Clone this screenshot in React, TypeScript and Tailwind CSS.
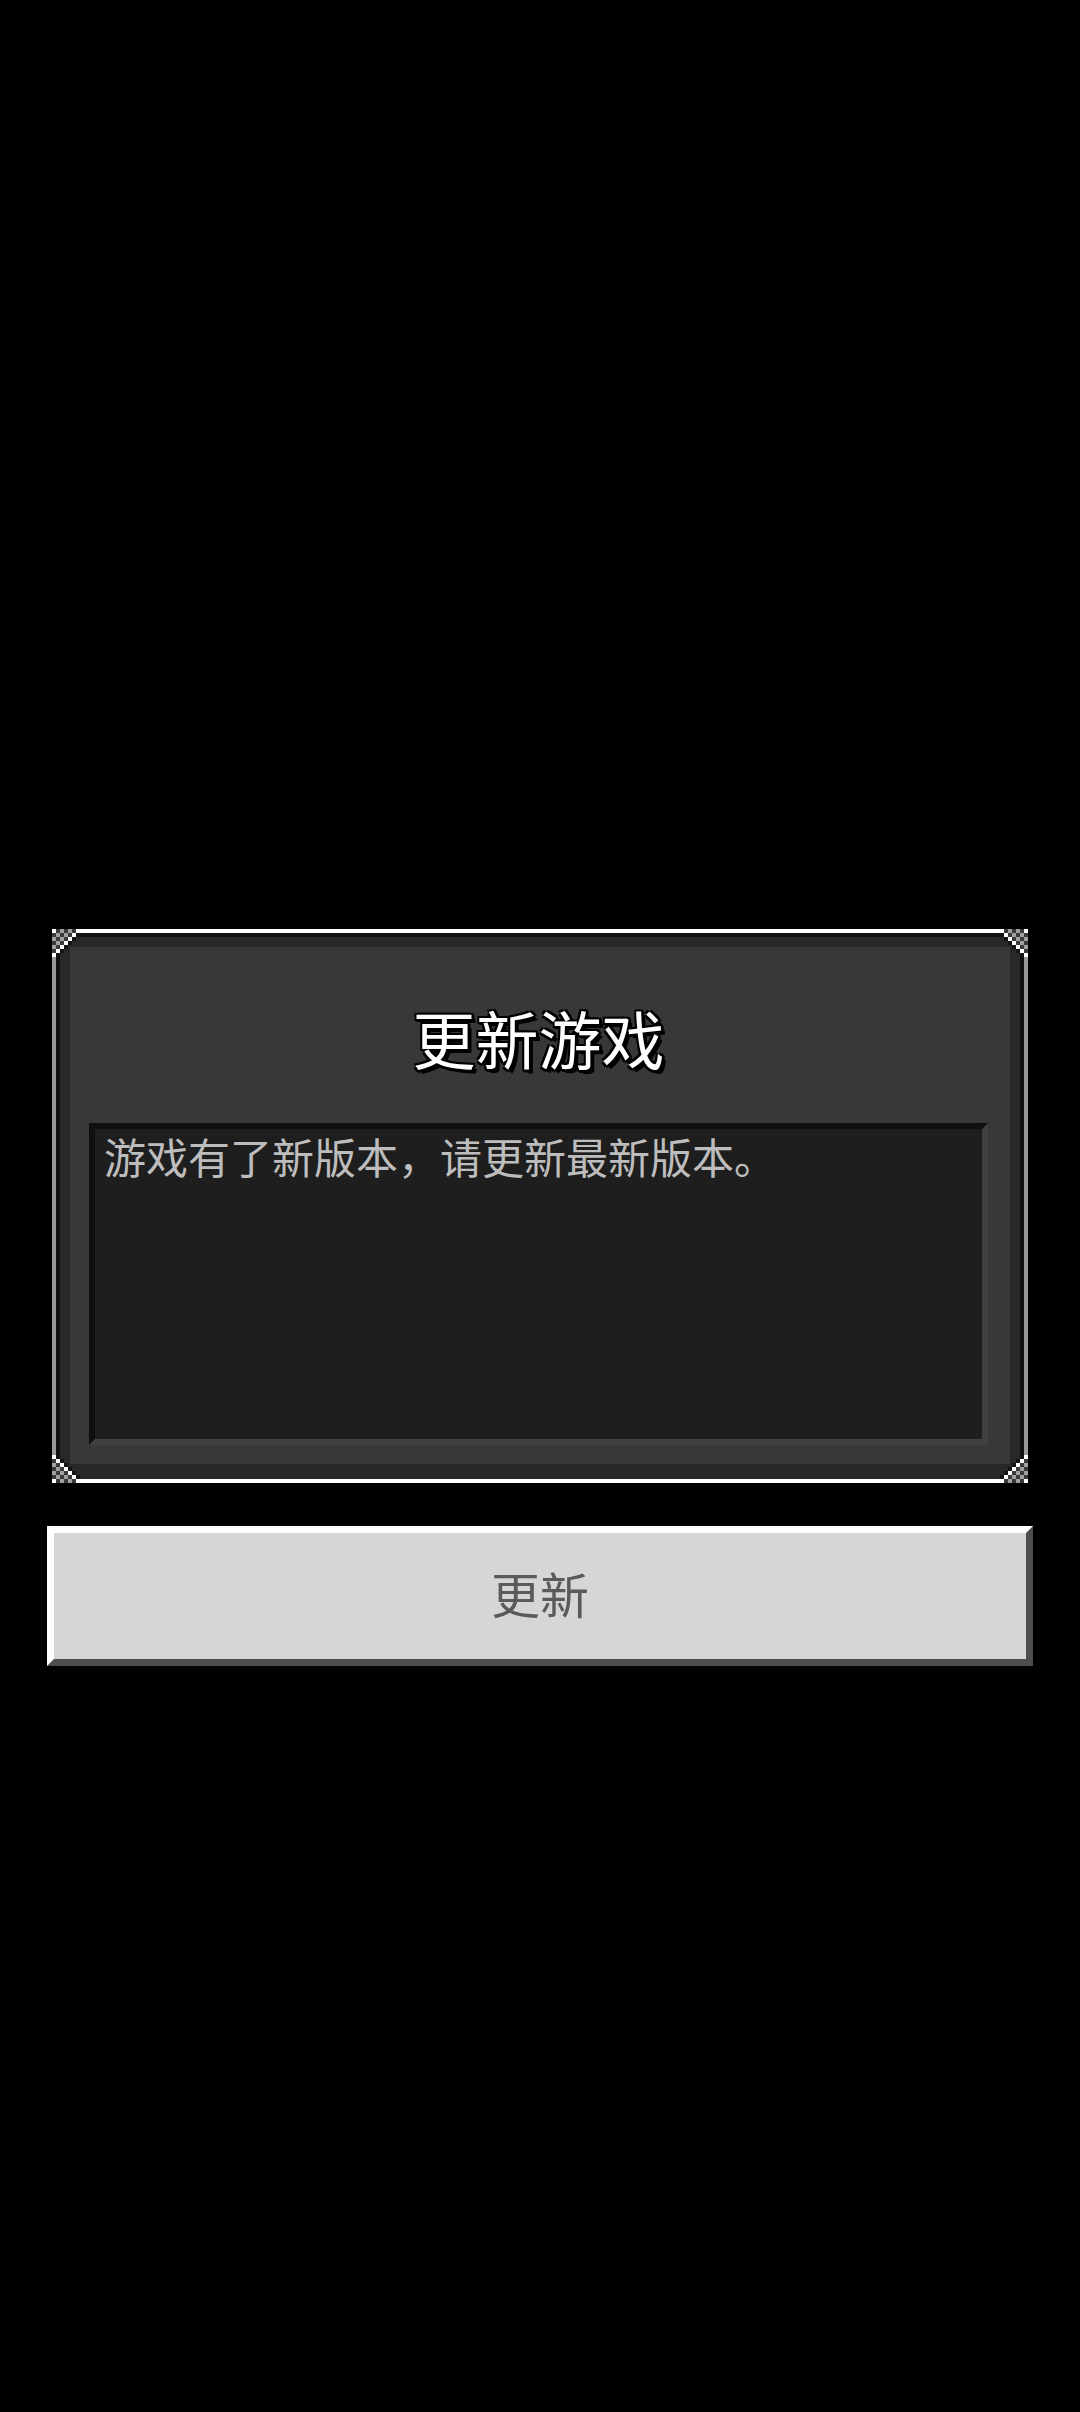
import React from "react";

const CJK = '"Noto Sans CJK SC", "Noto Sans", sans-serif';

function Corner({ className }: { className: string }) {
  const cells: React.ReactElement[] = [];
  for (let r = 0; r < 7; r++) {
    for (let c = 0; c < 7; c++) {
      const s = c + r;
      let fill: string | null = null;
      if (c === 0 && r === 0) fill = "#ffffff";
      else if (s < 6) fill = s % 2 === 0 ? "#a0a0a0" : "#3a3a3a";
      else if (s === 6) fill = "#ffffff";
      else if (s === 7) fill = "#141414";
      if (fill) cells.push(<rect key={`${r}-${c}`} x={c * 4} y={r * 4} width={4} height={4} fill={fill} />);
    }
  }
  return (
    <svg width="28" height="28" viewBox="0 0 28 28" className={className} shapeRendering="crispEdges">
      {cells}
    </svg>
  );
}

export default function App() {
  return (
    <div className="w-[1080px] h-[2412px] bg-black flex flex-col" style={{ fontFamily: CJK }}>
      <div className="relative ml-[52px] mt-[929px] w-[976px] h-[554px]">
        <div className="h-full flex flex-col border-[4px] border-t-white border-b-white border-l-[#9a9a9a] border-r-[#9a9a9a] bg-[#121212] pt-[4px] px-[4px]">
          <div className="flex-1 flex flex-col bg-[#282828] pt-[10px] px-[10px] pb-[15px]">
            <div className="flex-1 flex flex-col bg-[#383838] pl-[19px] pr-[22px] pb-[19px]">
              <div
                className="mt-[58px] mb-[54px] h-[64px] text-center text-[63px] leading-[64px] text-white [text-shadow:-2px_-2px_0_#000,2px_-2px_0_#000,-2px_2px_0_#000,2px_2px_0_#000,0_3px_0_#000,3px_0_0_#000,4px_4px_0_#000]"
              >
                更新游戏
              </div>
              <div className="flex-1 border-[6px] border-t-[#0f0f0f] border-l-[#0f0f0f] border-b-[#404040] border-r-[#404040] bg-[#1e1e1e] pl-[9px] pt-[2px]">
                <div className="text-[42px] leading-[50px] text-[#bdbdbd]">游戏有了新版本，请更新最新版本。</div>
              </div>
            </div>
          </div>
        </div>
        <Corner className="absolute top-0 left-0" />
        <Corner className="absolute top-0 right-0 -scale-x-100" />
        <Corner className="absolute bottom-0 left-0 -scale-y-100" />
        <Corner className="absolute bottom-0 right-0 -scale-x-100 -scale-y-100" />
      </div>
      <div className="ml-[47px] mt-[43px] w-[986px] h-[140px] border-[7px] border-t-white border-l-white border-b-[#4d4d4d] border-r-[#4d4d4d] bg-[#d6d6d6] flex items-center justify-center pb-[6px]">
        <span className="text-[49px] leading-[56px] text-[#5a5a5a]">更新</span>
      </div>
    </div>
  );
}
